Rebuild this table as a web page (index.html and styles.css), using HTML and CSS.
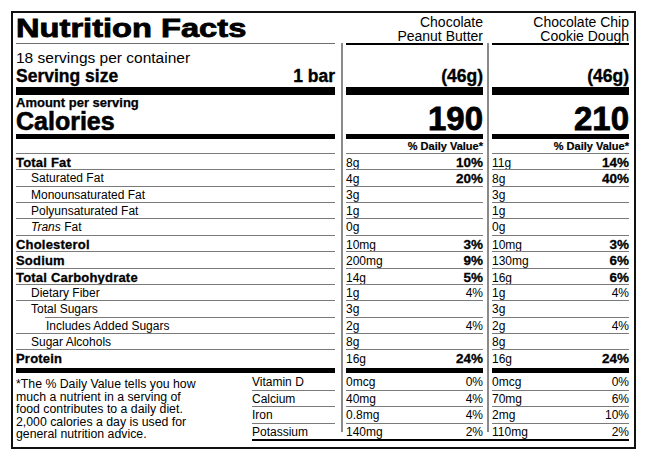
FILE: index.html
```html
<!DOCTYPE html>
<html lang="en">
<head>
<meta charset="utf-8">
<title>Nutrition Facts</title>
<link rel="stylesheet" href="styles.css">
</head>
<body>
<div class="label">
  <div class="grid">
    <div class="vline v1"></div>
    <div class="vline v2"></div>

    <div class="lab title"><span class="title-text">Nutrition Facts</span></div>
    <div class="c1 name">Chocolate<br>Peanut Butter</div>
    <div class="c2 name">Chocolate Chip<br>Cookie Dough</div>

    <div class="lab servings">18 servings per container</div>
    <div class="c1"></div>
    <div class="c2"></div>

    <div class="lab size"><span>Serving size</span><span>1 bar</span></div>
    <div class="c1 size">(46g)</div>
    <div class="c2 size">(46g)</div>

    <div class="lab bar"></div>
    <div class="c1 bar"></div>
    <div class="c2 bar"></div>

    <div class="lab cal"><span class="amount">Amount per serving</span><span class="cal-word">Calories</span></div>
    <div class="c1 kcal">190</div>
    <div class="c2 kcal">210</div>

    <div class="lab bar"></div>
    <div class="c1 bar"></div>
    <div class="c2 bar"></div>

    <div class="lab"></div>
    <div class="c1 dv">% Daily Value*</div>
    <div class="c2 dv">% Daily Value*</div>

    <div class="lab row b">Total Fat</div>
    <div class="c1 row val"><span>8g</span><span class="pb">10%</span></div>
    <div class="c2 row val"><span>11g</span><span class="pb">14%</span></div>

    <div class="lab row i1">Saturated Fat</div>
    <div class="c1 row val"><span>4g</span><span class="pb">20%</span></div>
    <div class="c2 row val"><span>8g</span><span class="pb">40%</span></div>

    <div class="lab row i1">Monounsaturated Fat</div>
    <div class="c1 row val"><span>3g</span></div>
    <div class="c2 row val"><span>3g</span></div>

    <div class="lab row i1">Polyunsaturated Fat</div>
    <div class="c1 row val"><span>1g</span></div>
    <div class="c2 row val"><span>1g</span></div>

    <div class="lab row i1"><em>Trans</em>&nbsp;Fat</div>
    <div class="c1 row val"><span>0g</span></div>
    <div class="c2 row val"><span>0g</span></div>

    <div class="lab row b">Cholesterol</div>
    <div class="c1 row val"><span>10mg</span><span class="pb">3%</span></div>
    <div class="c2 row val"><span>10mg</span><span class="pb">3%</span></div>

    <div class="lab row b">Sodium</div>
    <div class="c1 row val"><span>200mg</span><span class="pb">9%</span></div>
    <div class="c2 row val"><span>130mg</span><span class="pb">6%</span></div>

    <div class="lab row b">Total Carbohydrate</div>
    <div class="c1 row val"><span>14g</span><span class="pb">5%</span></div>
    <div class="c2 row val"><span>16g</span><span class="pb">6%</span></div>

    <div class="lab row i1">Dietary Fiber</div>
    <div class="c1 row val"><span>1g</span><span>4%</span></div>
    <div class="c2 row val"><span>1g</span><span>4%</span></div>

    <div class="lab row i1">Total Sugars</div>
    <div class="c1 row val"><span>3g</span></div>
    <div class="c2 row val"><span>3g</span></div>

    <div class="lab row i2">Includes Added Sugars</div>
    <div class="c1 row val"><span>2g</span><span>4%</span></div>
    <div class="c2 row val"><span>2g</span><span>4%</span></div>

    <div class="lab row i1">Sugar Alcohols</div>
    <div class="c1 row val"><span>8g</span></div>
    <div class="c2 row val"><span>8g</span></div>

    <div class="lab row b">Protein</div>
    <div class="c1 row val"><span>16g</span><span class="pb">24%</span></div>
    <div class="c2 row val"><span>16g</span><span class="pb">24%</span></div>

    <div class="lab bar"></div>
    <div class="c1 bar"></div>
    <div class="c2 bar"></div>

    <p class="foot">*The % Daily Value tells you how much a nutrient in a serving of food contributes to a daily diet. 2,000 calories a day is used for general nutrition advice.</p>
    <div class="vl row first">Vitamin D</div>
    <div class="c1 row val first"><span>0mcg</span><span>0%</span></div>
    <div class="c2 row val first"><span>0mcg</span><span>0%</span></div>

    <div class="vl row">Calcium</div>
    <div class="c1 row val"><span>40mg</span><span>4%</span></div>
    <div class="c2 row val"><span>70mg</span><span>6%</span></div>

    <div class="vl row">Iron</div>
    <div class="c1 row val"><span>0.8mg</span><span>4%</span></div>
    <div class="c2 row val"><span>2mg</span><span>10%</span></div>

    <div class="vl row">Potassium</div>
    <div class="c1 row val"><span>140mg</span><span>2%</span></div>
    <div class="c2 row val"><span>110mg</span><span>2%</span></div>

    <div class="endline"></div>
  </div>
</div>
</body>
</html>
```

FILE: styles.css
```css
* { box-sizing: border-box; }

html, body {
  margin: 0;
  padding: 0;
  background: #fff;
}

body {
  font-family: "Liberation Sans", Arial, Helvetica, sans-serif;
  color: #000;
}

.label {
  margin: 11px 0 0 11px;
  width: 625px;
  border: 2px solid #111;
  padding: 0 5px 6px 3px;
}

.grid {
  display: grid;
  grid-template-columns: 236px 83px 11px 137px 9px 137px;
  grid-template-rows: 32px 21px 21px 8px 39px 5px 14px repeat(12, 16.36px) 19px 5px repeat(4, 16.5px) 2px;
}

.lab { grid-column: 1 / 3; }
.c1 { grid-column: 4; }
.c2 { grid-column: 6; }
.vl { grid-column: 2; }

.vline {
  grid-row: 2 / 26;
  width: 2px;
  background: #8a8a8a;
  justify-self: start;
  margin-top: -2px;
  margin-bottom: 7px;
}
.v1 { grid-column: 3; margin-left: 6px; }
.v2 { grid-column: 5; margin-left: 4px; }

/* header */
.title {
  align-self: stretch;
  display: flex;
  align-items: flex-end;
  border-bottom: 1px solid #6f6f6f;
  margin-bottom: 1px;
  padding-bottom: 2px;
}
.title-text {
  display: inline-block;
  font-size: 25.5px;
  line-height: 25px;
  font-weight: 700;
  -webkit-text-stroke: 0.8px #000;
  transform: scaleX(1.28);
  transform-origin: left bottom;
  white-space: nowrap;
}

.name {
  align-self: end;
  text-align: right;
  font-size: 14px;
  line-height: 14px;
  border-bottom: 2px solid #000;
}

.servings {
  align-self: end;
  font-size: 15.5px;
  line-height: 17px;
}

.size {
  align-self: end;
  font-size: 17.5px;
  line-height: 20px;
  font-weight: 700;
  -webkit-text-stroke: 0.35px #000;
  padding-bottom: 1px;
  text-align: right;
}
.lab.size {
  display: flex;
  justify-content: space-between;
}

.bar { background: #000; }

.cal {
  display: flex;
  flex-direction: column;
  justify-content: flex-end;
  font-weight: 700;
}
.amount {
  font-size: 13px;
  line-height: 13px;
  -webkit-text-stroke: 0.25px #000;
}
.cal-word {
  font-size: 25px;
  line-height: 25px;
  -webkit-text-stroke: 0.6px #000;
}

.kcal {
  align-self: end;
  text-align: right;
  font-size: 33px;
  line-height: 30px;
  font-weight: 700;
  -webkit-text-stroke: 0.8px #000;
}

.dv {
  text-align: right;
  font-size: 11px;
  line-height: 14px;
  font-weight: 700;
  -webkit-text-stroke: 0.2px #000;
}

/* nutrient rows */
.row {
  border-top: 1px solid #7a7a7a;
  padding-top: 2px;
  font-size: 12px;
  line-height: 13.5px;
  white-space: nowrap;
}
.row.first {
  border-top: 0;
  padding-top: 3px;
}
.row.b {
  font-size: 13px;
  font-weight: 700;
  letter-spacing: 0.2px;
  -webkit-text-stroke: 0.3px #000;
}
.row.i1 { padding-left: 15px; }
.row.i2 { margin-left: 29px; padding-left: 1px; }

.val {
  display: flex;
  justify-content: space-between;
  align-items: baseline;
}
.pb {
  font-size: 13.5px;
  font-weight: 700;
  -webkit-text-stroke: 0.3px #000;
}

.foot {
  grid-column: 1;
  grid-row: span 4;
  margin: 0;
  padding-top: 5px;
  width: 184px;
  font-size: 12.3px;
  line-height: 12.5px;
}

.endline {
  grid-column: 2 / 7;
  background: #000;
}
```
